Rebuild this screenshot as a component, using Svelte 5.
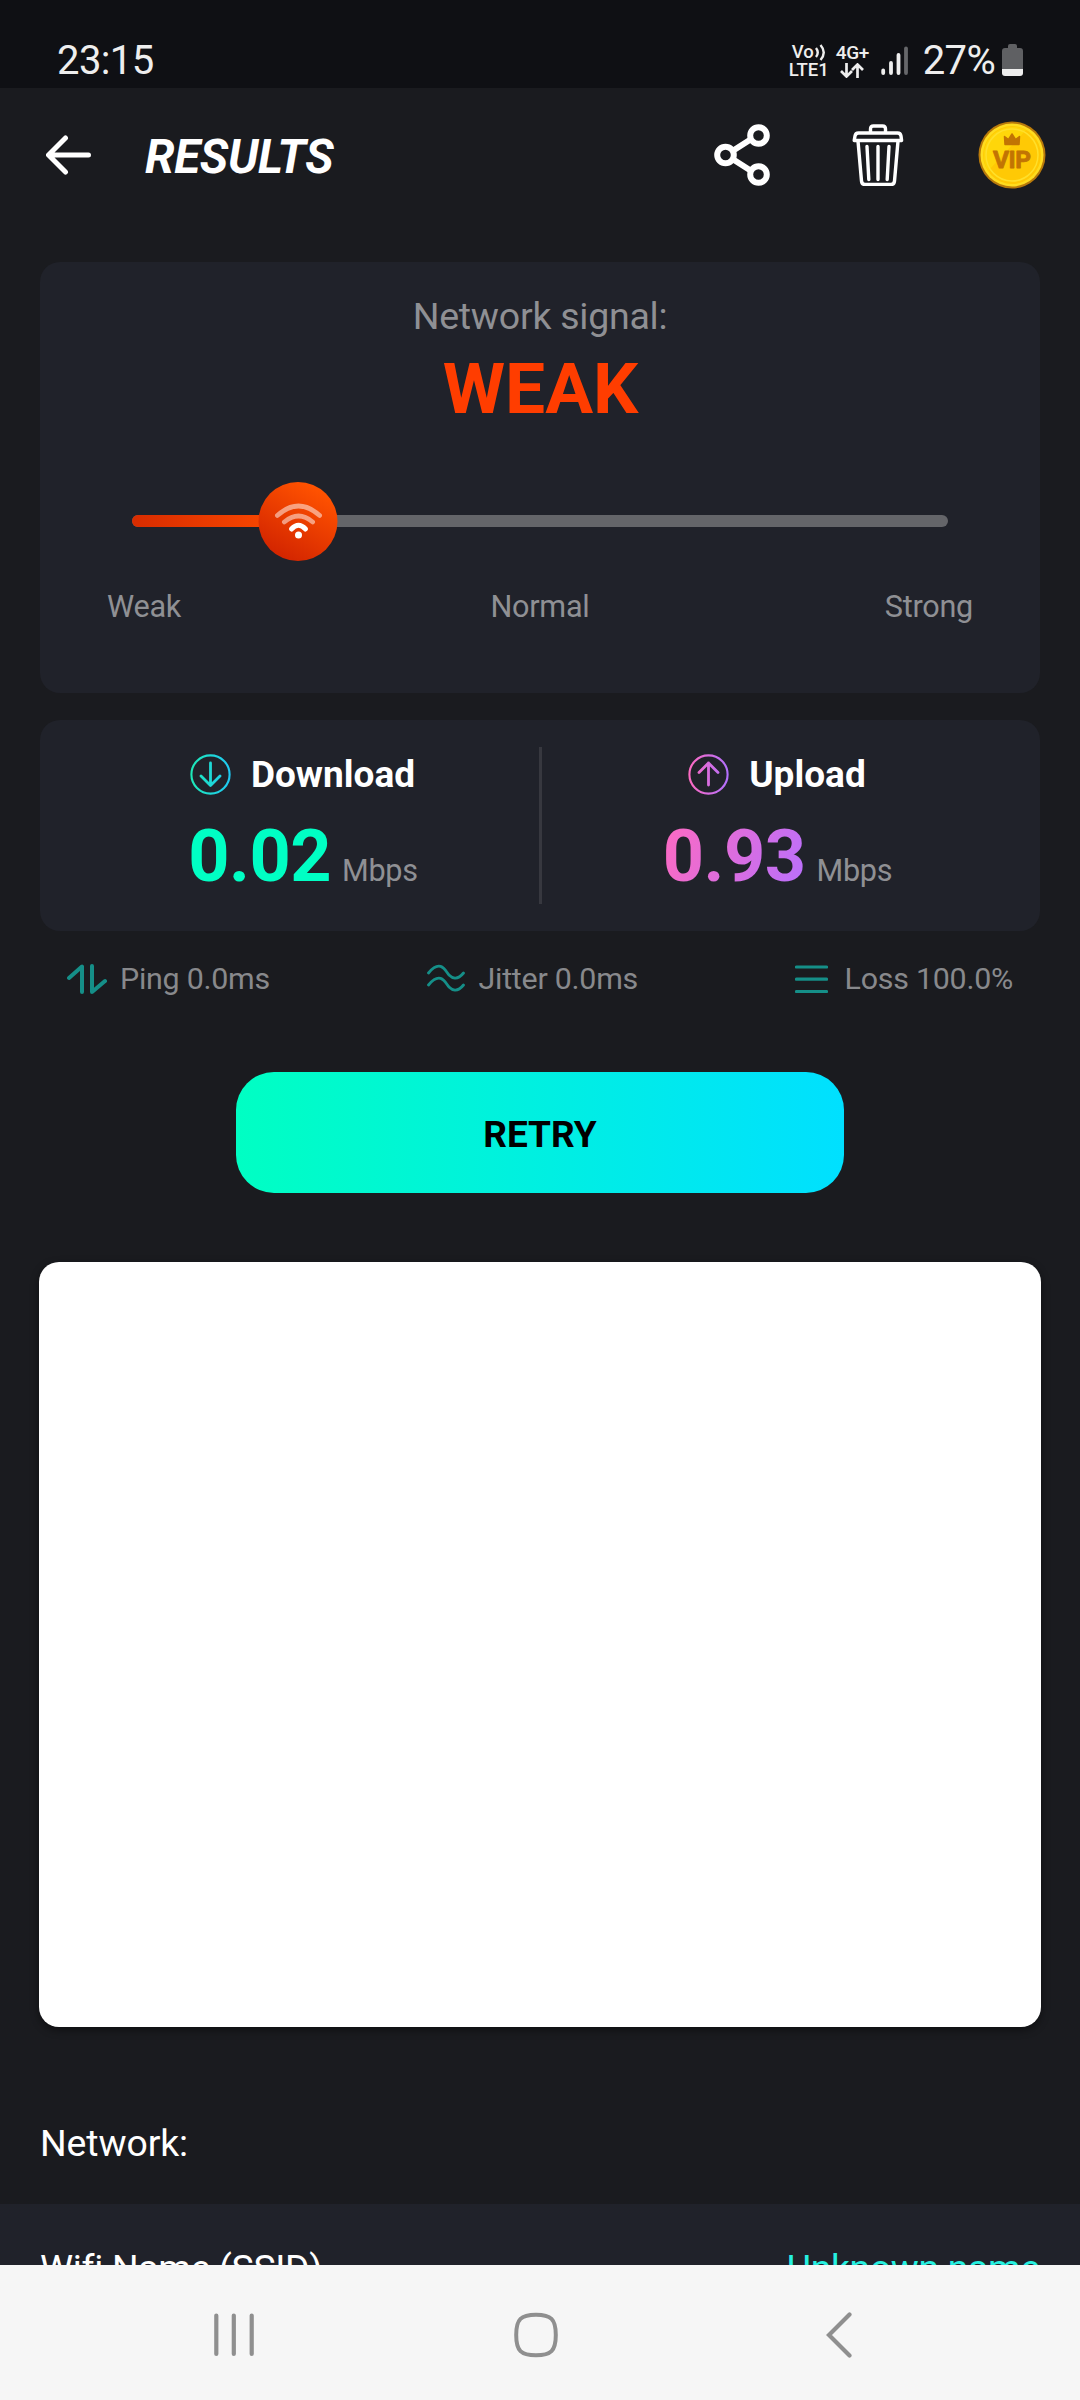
<script lang="ts">
	const signal = { label: 'WEAK', value: 20.4 };
	const scale = ['Weak', 'Normal', 'Strong'];

	const speeds = [
		{ id: 'download', title: 'Download', value: '0.02', arrow: 'M20.5 9v22M11 22l9.5 9.5L30 22' },
		{ id: 'upload', title: 'Upload', value: '0.93', arrow: 'M20.5 31V9M11 18.500l9.500-9.500 9.500 9.500' }
	];

	const stats = [
		{
			id: 'ping',
			text: 'Ping 0.0ms',
			width: 40,
			stroke: 4,
			gap: 13,
			path: 'M2 14 15 2.500V28M25 2v26L38 17'
		},
		{
			id: 'jitter',
			text: 'Jitter 0.0ms',
			width: 38,
			stroke: 2.8,
			gap: 14,
			path: 'M1.500 9C14-6 19 8 22 11s8 6 14.500-2M1.500 21C14 6 19 20 22 23s8 6 14.500-2'
		},
		{
			id: 'loss',
			text: 'Loss 100.0%',
			width: 33,
			stroke: 3.2,
			gap: 17,
			path: 'M1.500 3h30M1.500 15.200h30M1.500 27.500h30'
		}
	];
</script>

<div class="screen">
	<div class="status-bar">
		<span class="clock">23:15</span>
		<div class="status-icons">
			<div class="volte">
				<div class="vo">
					<span>Vo</span>
					<svg width="11" height="17" viewBox="0 0 11 17" fill="none" stroke="#eee" stroke-width="2.400">
						<path d="M1 4q3.500 4.500 0 9M5.500 1q6.500 7.500 0 15" />
					</svg>
				</div>
				<div>LTE1</div>
			</div>
			<div class="data">
				<div>4G+</div>
				<svg width="24" height="15" viewBox="0 0 24 15" fill="none" stroke="#eee" stroke-width="2.700">
					<path d="M6.500 0v13M1 8l5.500 5.500L12 8M17.500 15V2M12 7l5.500-5.500L23 7" />
				</svg>
			</div>
			<svg class="bars" width="28" height="30" viewBox="0 0 28 30" stroke="#eee" stroke-width="3.800" stroke-linecap="round">
				<path d="M2.200 24.500V27M10 17v10M17.500 9v18" />
				<path d="M25 2.500V27" stroke="#66676a" />
			</svg>
			<span class="percent">27%</span>
			<svg class="battery" width="21" height="32" viewBox="0 0 21 32">
				<path d="M6 2q0-2 2-2h5q2 0 2 2v2h3q3 0 3 3v18H0V7q0-3 3-3h3z" fill="#5f6063" />
				<path d="M0 25h21v4q0 3-3 3H3q-3 0-3-3z" fill="#eee" />
			</svg>
		</div>
	</div>

	<header>
		<svg width="46" height="40" viewBox="0 0 46 40" fill="none" stroke="#fff" stroke-width="5" stroke-linecap="round" stroke-linejoin="round">
			<path d="M42.500 20H3M19.500 3 2.500 20l17 17" />
		</svg>
		<h1>RESULTS</h1>
		<div class="actions">
			<svg width="58" height="62" viewBox="0 0 58 62" fill="none" stroke="#fff" stroke-width="6">
				<circle cx="12.500" cy="31" r="8.300" />
				<circle cx="45.500" cy="11.500" r="8.300" />
				<circle cx="45.500" cy="50.500" r="8.300" />
				<path d="m19.500 27 18-11.500M19.500 35l18 11.500" />
			</svg>
			<svg class="trash" width="52" height="62" viewBox="0 0 52 62" fill="none" stroke="#fff" stroke-width="3.400" stroke-linecap="round" stroke-linejoin="round">
				<path d="M18.500 8V5q0-3 3-3h9q3 0 3 3v3" />
				<path d="M6.500 9h39q3 0 3.500 3l.600 4.500H2.200L3 12q.500-3 3.500-3z" />
				<path d="m6 17 3.500 40q.300 3.500 3.500 3.500h26q3.200 0 3.500-3.500L46 17" />
				<path d="m15 22.500 1.800 33M26 22.500v33M37 22.500l-1.800 33" />
			</svg>
			<svg width="68" height="68" viewBox="0 0 68 68">
				<circle cx="34" cy="34" r="33.500" fill="#b97a0a" />
				<circle cx="34" cy="34" r="31.500" fill="#ffdc1f" />
				<circle cx="34" cy="34" r="29" fill="#ffc905" />
				<path d="M10 50A29 29 0 0 1 48 9z" fill="#ffd60a" />
				<circle cx="34" cy="34" r="26" fill="none" stroke="#ffdf2b" stroke-width="1.500" />
				<path d="m27 23.500-.5-8 4 3L34 13l3.500 5.500 4-3-.5 8z" fill="#c27403" stroke="#c27403" stroke-width="1.500" stroke-linejoin="round" />
				<text class="vip" x="34" y="47" text-anchor="middle" textLength="38">VIP</text>
			</svg>
		</div>
	</header>

	<main>
		<section class="card signal">
			<div class="caption">Network signal:</div>
			<div class="rating">{signal.label}</div>
			<div class="slider">
				<div class="track">
					<div class="fill" style="width: {signal.value}%"></div>
				</div>
				<div class="knob" style="left: {signal.value}%">
					<svg width="48" height="36" viewBox="0 0 48 36" fill="none" stroke="#fff" stroke-width="4.600" stroke-linecap="round">
						<path d="M2.800 12.500q21.200-19 42.400 0M9.800 19q14.200-12 28.400 0" opacity=".5" />
						<path d="M17 26q7-7.500 14 0" stroke-width="5" />
						<circle cx="24" cy="32" r="3.500" fill="#fff" stroke="none" />
					</svg>
				</div>
			</div>
			<div class="scale">
				{#each scale as step}
					<span>{step}</span>
				{/each}
			</div>
		</section>

		<section class="card speeds">
			{#each speeds as speed (speed.id)}
				<div class="speed {speed.id}">
					<div class="title">
						<svg width="41" height="41" viewBox="0 0 41 41" fill="none" stroke="url(#{speed.id}-stroke)" stroke-linecap="round" stroke-linejoin="round">
							<defs>
								<linearGradient id="{speed.id}-stroke" gradientUnits="userSpaceOnUse" x1="0" y1="0" x2="41" y2="0">
									<stop offset="0" class="from" />
									<stop offset="1" class="to" />
								</linearGradient>
							</defs>
							<circle cx="20.500" cy="20.500" r="19.100" stroke-width="2.100" />
							<path d={speed.arrow} stroke-width="2.800" />
						</svg>
						<span>{speed.title}</span>
					</div>
					<div class="reading">
						<span class="value">{speed.value}</span>
						<span class="unit">Mbps</span>
					</div>
				</div>
			{/each}
		</section>

		<div class="stats">
			{#each stats as stat (stat.id)}
				<div class="stat" style="gap: {stat.gap}px">
					<svg width={stat.width} height="30" viewBox="0 0 {stat.width} 30" fill="none" stroke="#158f88" stroke-width={stat.stroke} stroke-linecap="round" stroke-linejoin="round">
						<path d={stat.path} />
					</svg>
					<span>{stat.text}</span>
				</div>
			{/each}
		</div>

		<button class="retry">RETRY</button>

		<div class="ad"></div>

		<h2>Network:</h2>
		<div class="row">
			<span>Wifi Name (SSID)</span>
			<span class="name">Unknown name</span>
		</div>
	</main>

	<nav>
		<svg width="42" height="46" viewBox="0 0 42 46" stroke="#8f8f8f" stroke-width="4.200" stroke-linecap="round">
			<path d="M3.300 3.500v38.500M20.800 3.500v38.500M38.700 3.500v38.500" />
		</svg>
		<svg class="home" width="46" height="46" viewBox="0 0 46 46" fill="none" stroke="#8f8f8f" stroke-width="4">
			<path d="M23 2.800C38 2.800 42.800 7 42.800 23S38 43.200 23 43.200 3.200 39 3.200 23 8 2.800 23 2.800z" />
		</svg>
		<svg width="28" height="46" viewBox="0 0 28 46" fill="none" stroke="#8f8f8f" stroke-width="4.200" stroke-linecap="round">
			<path d="M24.500 2.500 4 23l20.500 20.500" />
		</svg>
	</nav>
</div>

<style>
	:global(body) {
		margin: 0;
		background: #1a1b1f;
	}

	.screen {
		display: flex;
		flex-direction: column;
		width: 1080px;
		height: 2400px;
		overflow: hidden;
		background: #1a1b1f;
		color: #fff;
		font-family: Roboto, 'Liberation Sans', sans-serif;
	}

	svg {
		display: block;
		flex: none;
	}

	.status-bar {
		display: flex;
		justify-content: space-between;
		flex: none;
		box-sizing: border-box;
		height: 88px;
		padding: 37px 57px 0 57px;
		background: #0f1014;
		color: #eee;
		font-size: 40px;
		line-height: 48px;
	}

	.clock {
		letter-spacing: -0.6px;
	}

	.status-icons {
		display: flex;
		align-items: flex-start;
	}

	.volte,
	.data {
		display: flex;
		flex-direction: column;
		align-items: center;
		padding-top: 7px;
		font-size: 18.5px;
		font-weight: 500;
		line-height: 17.5px;
	}

	.vo {
		display: flex;
		gap: 1px;
	}

	.data {
		margin-left: 7px;
		gap: 1px;
		font-size: 19px;
		letter-spacing: -0.4px;
	}

	.bars {
		margin: 9px 0 0 12px;
	}

	.percent {
		margin-left: 14px;
		letter-spacing: -0.7px;
	}

	.battery {
		margin: 7px 0 0 7px;
	}

	header {
		display: flex;
		align-items: center;
		flex: none;
		height: 133px;
		padding: 0 34px 0 46px;
	}

	h1 {
		margin: 4px 0 0 53px;
		font-size: 47.5px;
		font-style: italic;
		font-weight: 700;
		line-height: 56px;
		letter-spacing: -0.3px;
	}

	.actions {
		display: flex;
		align-items: center;
		margin-left: auto;
	}

	.trash {
		margin: 0 74px 0 81px;
	}

	.vip {
		fill: #c27403;
		stroke: #c27403;
		stroke-width: 0.8px;
		stroke-linejoin: round;
		font-size: 24.5px;
		font-weight: 700;
	}

	main {
		display: flex;
		flex-direction: column;
		flex: 1;
		min-height: 0;
		overflow: hidden;
		padding-top: 41px;
	}

	.card {
		flex: none;
		box-sizing: border-box;
		margin: 0 40px;
		border-radius: 20px;
		background: #20222a;
	}

	.signal {
		height: 431px;
		padding: 29px 67px 0;
		text-align: center;
	}

	.caption {
		color: #8f9094;
		font-size: 37.5px;
		line-height: 50px;
		letter-spacing: -0.25px;
	}

	.rating {
		margin-top: 8px;
		padding-left: 1px;
		color: #ff3d00;
		font-size: 71.3px;
		font-weight: 700;
		line-height: 80px;
	}

	.slider {
		position: relative;
		display: flex;
		align-items: center;
		height: 80px;
		margin: 52px 25px 0;
	}

	.track {
		flex: 1;
		height: 12px;
		overflow: hidden;
		border-radius: 6px;
		background: #646569;
	}

	.fill {
		height: 100%;
		background: linear-gradient(90deg, #d82c00, #ff4c00);
	}

	.knob {
		position: absolute;
		top: 0.5px;
		display: flex;
		align-items: center;
		justify-content: center;
		width: 79px;
		height: 79px;
		border-radius: 50%;
		background: linear-gradient(30deg, #d42600 15%, #ff5200 85%);
		transform: translateX(-50%);
	}

	.scale {
		display: grid;
		grid-template-columns: repeat(3, 1fr);
		margin-top: 26px;
		color: #8f9094;
		font-size: 30.6px;
		line-height: 40px;
		letter-spacing: -0.25px;
	}

	.scale span:first-child {
		text-align: left;
	}

	.scale span:last-child {
		text-align: right;
	}

	.speeds {
		display: grid;
		grid-template-columns: 1fr 1fr;
		height: 211px;
		margin-top: 27px;
		padding: 27px 26px;
	}

	.speed {
		display: flex;
		flex-direction: column;
		align-items: center;
	}

	.download {
		margin-right: -2px;
		border-right: 3px solid #37383f;
	}

	.download .from {
		stop-color: #1de9b6;
	}

	.download .to {
		stop-color: #1fc8f5;
	}

	.upload .from {
		stop-color: #ff6ac0;
	}

	.upload .to {
		stop-color: #b070ff;
	}

	.title {
		display: flex;
		align-items: center;
		gap: 20px;
		margin-top: 3px;
		font-size: 37px;
		font-weight: 700;
		line-height: 48px;
	}

	.title span {
		padding-top: 1px;
	}

	.reading {
		display: flex;
		align-items: baseline;
		gap: 11px;
		margin-top: 16px;
		padding-left: 1px;
		line-height: 84px;
	}

	.value {
		color: #00ffc4;
		font-size: 72px;
		font-weight: 700;
		letter-spacing: -0.5px;
	}

	.upload .value {
		background: linear-gradient(110deg, #ff6ac0, #b770ff);
		background-clip: text;
		color: transparent;
	}

	.unit {
		color: #8f9094;
		font-size: 30.6px;
		line-height: 40px;
		letter-spacing: -0.3px;
	}

	.stats {
		display: flex;
		justify-content: space-between;
		flex: none;
		margin: 28px 67px 0;
		color: #88898c;
		font-size: 30.4px;
		line-height: 40px;
		letter-spacing: -0.25px;
	}

	.stat {
		display: flex;
		align-items: center;
	}

	.retry {
		flex: none;
		width: 608px;
		height: 121px;
		margin: 73px auto 0;
		padding: 3px 0 0;
		border: 0;
		border-radius: 38px;
		background: linear-gradient(90deg, #00ffc3, #00e0ff);
		color: #000;
		font: 700 37px Roboto, 'Liberation Sans', sans-serif;
	}

	.ad {
		flex: none;
		height: 765px;
		margin: 69px 39px 0;
		border-radius: 20px;
		background: #fff;
		box-shadow: 0 3px 8px rgba(0, 0, 0, 0.45);
	}

	h2 {
		flex: none;
		margin: 91px 40px 0;
		font-size: 37.4px;
		font-weight: 400;
		line-height: 50px;
		letter-spacing: -0.1px;
	}

	.row {
		display: flex;
		justify-content: space-between;
		flex: none;
		height: 130px;
		box-sizing: border-box;
		margin-top: 36px;
		padding: 39px 40px 0 40px;
		background: #20222a;
		font-size: 37.3px;
		line-height: 50px;
		letter-spacing: -0.3px;
	}

	.name {
		color: #26f0e0;
	}

	nav {
		display: flex;
		align-items: center;
		justify-content: space-between;
		flex: none;
		box-sizing: border-box;
		height: 135px;
		padding: 5px 227px 0 213px;
		background: #f6f6f6;
	}

	.home {
		margin-right: 9px;
	}
</style>
